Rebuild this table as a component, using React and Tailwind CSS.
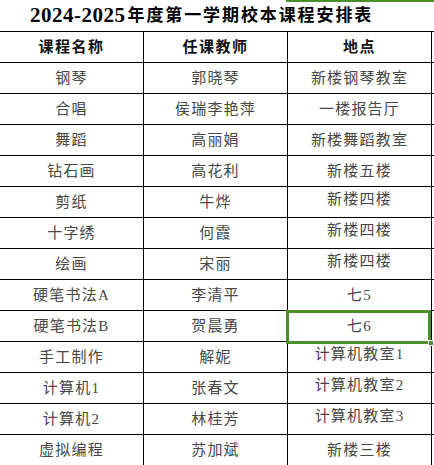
import React from "react";

const rows = [
  ["钢琴", "郭晓琴", "新楼钢琴教室", 0],
  ["合唱", "侯瑞李艳萍", "一楼报告厅", 0],
  ["舞蹈", "高丽娟", "新楼舞蹈教室", 0],
  ["钻石画", "高花利", "新楼五楼", 0],
  ["剪纸", "牛烨", "新楼四楼", 1],
  ["十字绣", "何霞", "新楼四楼", 1],
  ["绘画", "宋丽", "新楼四楼", 1],
  ["硬笔书法A", "李清平", "七5", 0],
  ["硬笔书法B", "贺晨勇", "七6", 0],
  ["手工制作", "解妮", "计算机教室1", 1],
  ["计算机1", "张春文", "计算机教室2", 1],
  ["计算机2", "林桂芳", "计算机教室3", 1],
  ["虚拟编程", "苏加斌", "新楼三楼", 0],
];

const font = { fontFamily: '"Liberation Serif", "Noto Sans CJK SC", serif' };

export default function App() {
  return (
    <div className="relative w-[434px] h-[465px] overflow-hidden bg-white text-[#474747]" style={font}>
      <div className="absolute left-[286px] top-0 w-[148px] h-[2px] bg-[#4a8f2a]" />
      <div className="h-[32px] border-b border-black flex items-center pl-[30px] text-black font-bold">
        <span className="text-[21px] tracking-[0.5px]">2024-2025</span>
        <span className="text-[17px] tracking-[1.9px] ml-[2px]">年度第一学期校本课程安排表</span>
      </div>
      <div className="flex h-[31px] border-b border-black text-[#111] font-bold text-[15px] tracking-[1.5px]">
        <div className="w-[144px] border-r border-black flex items-center justify-center">课程名称</div>
        <div className="w-[144px] border-r border-black flex items-center justify-center">任课教师</div>
        <div className="w-[144px] border-r border-black flex items-center justify-center">地点</div>
      </div>
      {rows.map(([a, b, c, up], i) => (
        <div key={i} className="flex h-[31px] border-b border-black text-[15px] tracking-[1.2px]">
          <div className="w-[144px] border-r border-black flex items-center justify-center">{a}</div>
          <div className="w-[144px] border-r border-black flex items-center justify-center">{b}</div>
          <div
            className={
              up
                ? "w-[144px] border-r border-black flex items-start pt-[1px] justify-center"
                : "w-[144px] border-r border-black flex items-center justify-center"
            }
          >
            {c}
          </div>
        </div>
      ))}
      <div className="absolute left-[286px] top-[310px] w-[145px] h-[34px] border-[3px] border-[#4a8f2a]" />
      <div className="absolute left-[428px] top-[340px] w-[6px] h-[6px] bg-[#4a8f2a] border border-white" />
    </div>
  );
}
